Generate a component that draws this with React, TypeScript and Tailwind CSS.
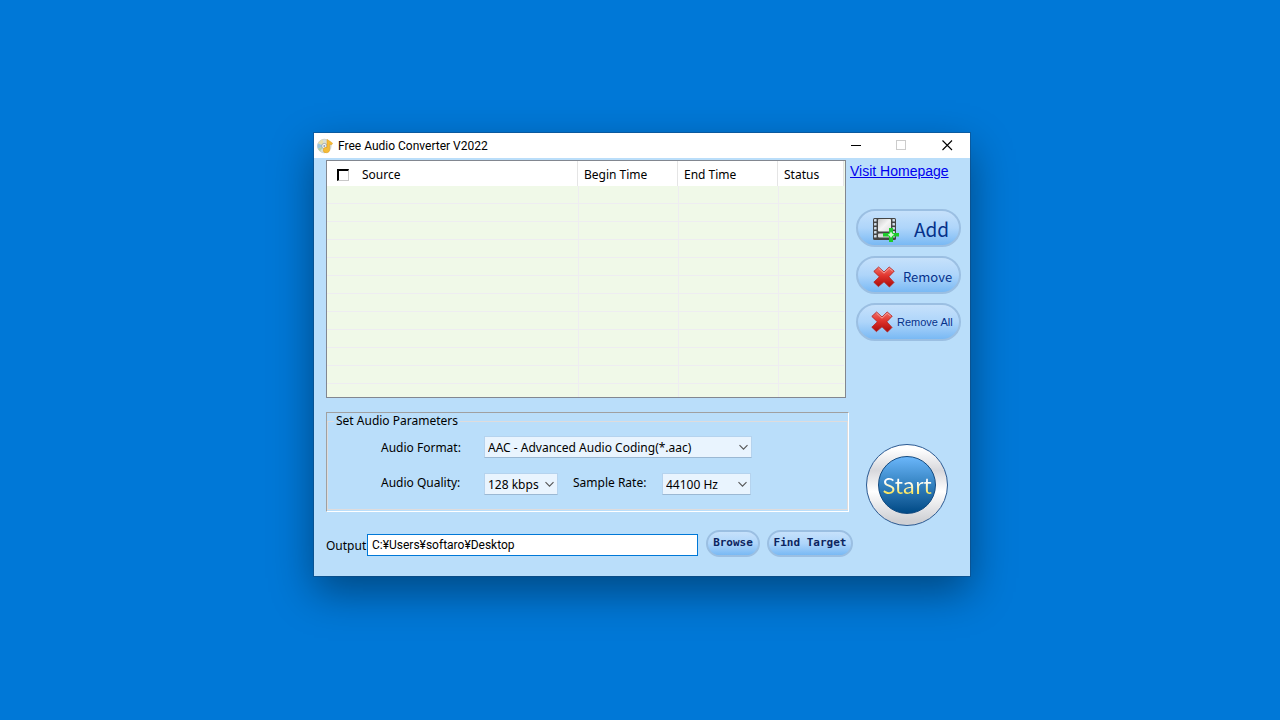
import type { ReactNode } from "react";
import clsx from "clsx";

const COLUMNS = ["Begin Time", "End Time", "Status"];
const EMPTY_ROWS = 11;

const FORMATS = ["AAC - Advanced Audio Coding(*.aac)", "MP3 - MPEG Layer-3(*.mp3)", "WAV - Waveform Audio(*.wav)"];
const QUALITIES = ["128 kbps", "192 kbps", "256 kbps"];
const SAMPLE_RATES = ["44100 Hz", "48000 Hz"];

function DiscIcon() {
    return (
        <svg width="16" height="16" viewBox="0 0 16 16" aria-hidden="true">
            <circle cx="7.3" cy="8" r="6.8" fill="#dadfd6" stroke="#b9c2c0" strokeWidth=".6" />
            <path d="M7.3 8 1 5.2A7 7 0 0 1 5.5 1.4Z" fill="#e9dfa8" />
            <path d="M7.3 8 .9 10.6A7 7 0 0 1 1 5.4Z" fill="#9cc6dc" />
            <path d="M7.3 8 3 13.3A7 7 0 0 1 1 10.6Z" fill="#b5d2a6" />
            <circle cx="7.3" cy="8" r="2.6" fill="#f6f7f5" stroke="#8a98a3" strokeWidth=".7" />
            <circle cx="7.3" cy="8" r="1" fill="#8ea0ae" />
            <path d="M10 1.4 12.6 3 15.6 5.2 14.6 6.8 12.6 6.2V11.6A3.2 2.7 0 1 1 10 9.4Z" fill="#f5bc35" stroke="#e09b18" strokeWidth=".5" />
        </svg>
    );
}

function FilmAddIcon() {
    return (
        <svg className="shrink-0" width="26" height="26" viewBox="0 -2 26 26" aria-hidden="true">
            <defs>
                <linearGradient id="film" x1="0" y1="0" x2="1" y2="1">
                    <stop offset="0" stopColor="#c9c9c9" />
                    <stop offset=".5" stopColor="#f4f4f4" />
                    <stop offset="1" stopColor="#dedede" />
                </linearGradient>
            </defs>
            <rect x="0" y="0" width="23" height="22" rx="1.5" fill="#444" />
            <rect x="5" y="1" width="13" height="12.5" rx="1" fill="url(#film)" />
            <rect x="5" y="15.5" width="13" height="4" rx="1" fill="#dcdcdc" />
            {[1, 5, 9, 13, 17].map((y) => (
                <g key={y} fill="#d0dbe6">
                    <rect x="1" y={y} width="2.6" height="2.6" rx=".6" />
                    <rect x="19.4" y={y} width="2.6" height="2.6" rx=".6" />
                </g>
            ))}
            <path d="M16 10h4v5h6v3.5h-6V24h-4v-5.5h-6V15h6Z" fill="#1fcb2c" />
            <path d="M18 13.6 19.2 15.6 21.2 16.8 19.2 18 18 20 16.8 18 14.8 16.8 16.8 15.6Z" fill="#d4fbd2" />
        </svg>
    );
}

function CrossIcon() {
    return (
        <svg className="shrink-0" width="22" height="22" viewBox="0 0 22 22" aria-hidden="true">
            <defs>
                <linearGradient id="cross" x1="0" y1="0" x2="0" y2="1">
                    <stop offset="0" stopColor="#f07068" />
                    <stop offset=".45" stopColor="#e0332c" />
                    <stop offset="1" stopColor="#a80a0a" />
                </linearGradient>
            </defs>
            <path
                d="M5.6 1 11 6 16.2 1 21.2 5.2 15.8 10.8 21 16.4 16.4 21 11 15.8 5.4 20.6.8 16.2 6.4 10.8.8 5.4Z"
                fill="url(#cross)"
                stroke="#b3201c"
                strokeWidth=".8"
                strokeLinejoin="round"
            />
            <path d="M5.6 2.2 11 7.2 16.2 2.3 19.8 5.2" fill="none" stroke="#f9aaa4" strokeWidth=".9" />
        </svg>
    );
}

type ComboProps = { id: string; options: string[]; className: string };

function Combo({ id, options, className }: ComboProps) {
    return (
        <div className={clsx("relative h-[22px]", className)}>
            <select
                id={id}
                className="h-full w-full appearance-none border border-[#b5d3ee] border-b-[#9bb8d3] bg-[#e9f4fe] pt-0.5 pl-[3px] text-black outline-none"
            >
                {options.map((option) => (
                    <option key={option}>{option}</option>
                ))}
            </select>
            <svg className="pointer-events-none absolute top-2 right-1" width="9" height="7" viewBox="0 0 9 7" aria-hidden="true">
                <path d="M.5 1.2 4.5 5.2 8.5 1.2" fill="none" stroke="#555" strokeWidth="1.1" />
            </svg>
        </div>
    );
}

type PillProps = { children: ReactNode; className: string };

function Pill({ children, className }: PillProps) {
    return (
        <button
            type="button"
            className={clsx(
                "flex items-center rounded-full border-2 border-[#9bbfe2] bg-linear-to-b from-[#c6e1fb] via-[#aed5fa] to-[#79b9f4]",
                className
            )}
        >
            {children}
        </button>
    );
}

export default function App() {
    return (
        <div className="flex min-h-screen justify-center overflow-hidden bg-[#0078d7] pt-[133px] pb-4 pl-1">
            <main className="h-fit w-full max-w-[656px] bg-[#badefa] font-['Noto_Sans','Open_Sans',sans-serif] text-xs text-black shadow-[0_0_0_1px_rgba(20,70,120,0.5),0_16px_40px_rgba(0,0,0,0.4)]">
                {/* Title bar */}
                <header className="flex h-[25px] items-center bg-white pl-[3px]">
                    <DiscIcon />
                    <h1 className="ml-[5px] flex-1 font-[Roboto,sans-serif]">Free Audio Converter V2022</h1>
                    <button type="button" aria-label="Minimize" className="flex h-full w-[46px] items-center justify-center">
                        <svg width="11" height="11" viewBox="0 0 11 11">
                            <path d="M1 5.5H11" stroke="#000" />
                        </svg>
                    </button>
                    <button type="button" aria-label="Maximize" disabled className="flex h-full w-[46px] items-center justify-center">
                        <svg width="11" height="11" viewBox="0 0 11 11">
                            <rect x=".5" y=".5" width="9" height="9" fill="none" stroke="#ccc" />
                        </svg>
                    </button>
                    <button type="button" aria-label="Close" className="flex h-full w-[46px] items-center justify-center">
                        <svg width="11" height="11" viewBox="0 0 11 11">
                            <path d="M.5 .5 10 10M10 .5.5 10" stroke="#000" strokeWidth="1.1" />
                        </svg>
                    </button>
                </header>

                <div className="flex">
                    <div className="flex-1 pt-0.5 pl-3">
                        {/* File list */}
                        <div className="mr-1 h-[238px] overflow-hidden border border-[#828790] bg-[#f0f9e8] pr-px">
                            <table className="h-full w-full table-fixed border-separate border-spacing-0 text-left">
                                <colgroup>
                                    <col />
                                    <col className="w-[100px]" />
                                    <col className="w-[100px]" />
                                    <col className="w-[66px]" />
                                </colgroup>
                                <thead>
                                    <tr className="h-[25px] bg-white">
                                        <th className="border-r border-[#e5e5e5] p-0 pt-0.5 pl-2.5 font-normal">
                                            <label className="flex items-center gap-[13px]">
                                                <input
                                                    type="checkbox"
                                                    className="h-3 w-3 appearance-none border-t-2 border-r border-b border-l-2 border-t-black border-r-[#c8c8c8] border-b-[#c8c8c8] border-l-black bg-white"
                                                />
                                                Source
                                            </label>
                                        </th>
                                        {COLUMNS.map((column) => (
                                            <th key={column} className="border-r border-[#e5e5e5] p-0 pt-0.5 pl-1.5 font-normal">
                                                {column}
                                            </th>
                                        ))}
                                    </tr>
                                </thead>
                                <tbody>
                                    {Array.from({ length: EMPTY_ROWS }, (_, row) => (
                                        <tr key={row} className="h-[18px]">
                                            <td className="border-b border-[#eeedf1] p-0" />
                                            <td className="border-b border-l border-[#eeedf1] p-0" />
                                            <td className="border-b border-l border-[#eeedf1] p-0" />
                                            <td className="border-b border-l border-[#eeedf1] p-0" />
                                        </tr>
                                    ))}
                                    <tr>
                                        <td className="p-0" />
                                        <td className="border-l border-[#eeedf1] p-0" />
                                        <td className="border-l border-[#eeedf1] p-0" />
                                        <td className="border-l border-[#eeedf1] p-0" />
                                    </tr>
                                </tbody>
                            </table>
                        </div>

                        {/* Audio parameters */}
                        <div className="mt-3.5 mr-px h-[100px] border border-t-[#a0a0a0] border-r-white border-b-white border-l-[#a0a0a0]">
                            <fieldset className="h-[97px] border border-[#dfdcdc] px-1.5">
                                <legend className="px-0.5 leading-4">Set Audio Parameters</legend>
                                <div className="flex items-center pt-[7px] pl-[47px]">
                                    <label htmlFor="format" className="w-[103px] pt-0.5">Audio Format:</label>
                                    <Combo id="format" options={FORMATS} className="w-[268px]" />
                                </div>
                                <div className="flex items-end pt-[15px] pl-[47px]">
                                    <label htmlFor="quality" className="w-[103px] pb-1">Audio Quality:</label>
                                    <Combo id="quality" options={QUALITIES} className="w-[74px]" />
                                    <label htmlFor="rate" className="ml-[15px] w-[89px] pb-1">Sample Rate:</label>
                                    <Combo id="rate" options={SAMPLE_RATES} className="w-[89px]" />
                                </div>
                            </fieldset>
                        </div>
                    </div>

                    {/* Actions */}
                    <aside className="flex w-[120px] flex-col">
                        <a href="#home" className="mt-[3px] font-['Liberation_Sans',sans-serif] text-sm text-[#0000ee] underline">
                            Visit Homepage
                        </a>
                        <div className="mt-7 ml-1.5 flex w-[105px] flex-col gap-[9px] font-['Noto_Sans_CJK_JP',sans-serif] text-[#06318a]">
                            <Pill className="h-[38px] pt-0.5 pl-[15px]">
                                <FilmAddIcon />
                                <span className="ml-[15px] text-[19px]">Add</span>
                            </Pill>
                            <Pill className="h-[38px] pt-[3px] pl-[15px]">
                                <CrossIcon />
                                <span className="ml-2 text-[13px]">Remove</span>
                            </Pill>
                            <Pill className="h-[38px] pl-[13px]">
                                <CrossIcon />
                                <span className="ml-1 font-['Liberation_Sans',sans-serif] text-[11px] whitespace-nowrap">Remove All</span>
                            </Pill>
                        </div>
                        <button
                            type="button"
                            className="mt-[103px] ml-4 h-[82px] w-[82px] rounded-full border border-[#2c5a92] bg-[linear-gradient(#ffffff_5%,#d8d8dc_32%,#ffffff_58%,#cfd0d4_95%)] p-[11px]"
                        >
                            <span className="flex h-full items-center justify-center rounded-full border border-[#124a80] bg-linear-to-b from-[#6ab6fa] via-[#3382c0] to-[#004a86] font-['Noto_Sans_CJK_JP',sans-serif] text-[22px]">
                                <span className="bg-linear-to-b from-white from-40% to-[#ffe860] to-75% bg-clip-text text-transparent">Start</span>
                            </span>
                        </button>
                    </aside>
                </div>

                {/* Output folder */}
                <div className="flex items-center pt-1 pb-[19px] pl-3">
                    <label htmlFor="output" className="w-[41px] pt-1">Output</label>
                    <input
                        id="output"
                        type="text"
                        defaultValue="C:¥Users¥softaro¥Desktop"
                        className="mt-0.5 h-[22px] w-[331px] border border-[#0078d7] bg-white px-1 font-[Roboto,sans-serif] outline-none"
                    />
                    <Pill className="ml-2 h-[27px] w-[54px] justify-center font-['DejaVu_Sans_Mono',monospace] text-[11px] font-bold text-[#0b2460]">
                        Browse
                    </Pill>
                    <Pill className="ml-[7px] h-[27px] w-[86px] justify-center font-['DejaVu_Sans_Mono',monospace] text-[11px] font-bold whitespace-nowrap text-[#0b2460]">
                        Find Target
                    </Pill>
                </div>
            </main>
        </div>
    );
}
